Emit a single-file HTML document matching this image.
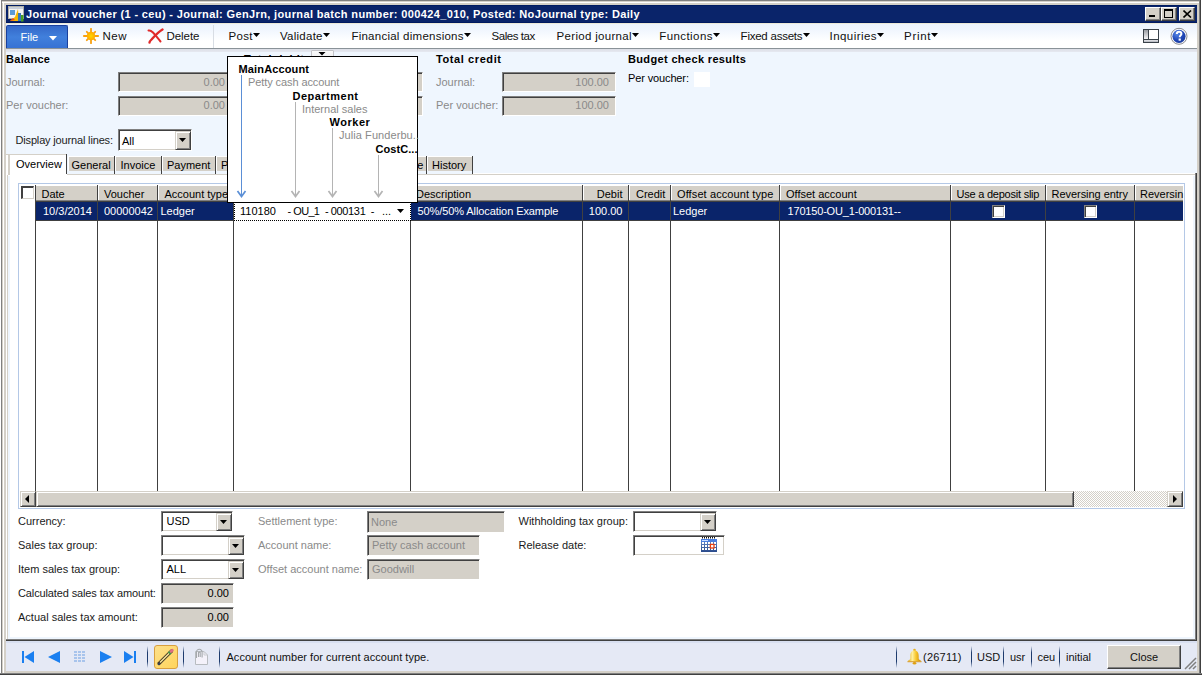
<!DOCTYPE html><html><head><meta charset='utf-8'><style>
*{margin:0;padding:0;box-sizing:border-box}
html,body{width:1202px;height:677px;overflow:hidden;background:#fff;position:relative;font-family:"Liberation Sans",sans-serif;font-size:11px;color:#000}
div{position:absolute}
.t{white-space:nowrap;line-height:14px}
</style></head><body><div style="left:0px;top:0px;width:1202px;height:677px;background:#d4d0c8"></div>
<div style="left:0px;top:0px;width:1202px;height:1px;background:#808080"></div>
<div style="left:0px;top:2px;width:1202px;height:1px;background:#fff"></div>
<div style="left:0px;top:0px;width:1px;height:677px;background:#fff"></div>
<div style="left:1px;top:0px;width:1px;height:677px;background:#808080"></div>
<div style="left:3px;top:2px;width:1px;height:675px;background:#fff"></div>
<div style="left:1199px;top:0px;width:1px;height:677px;background:#808080"></div>
<div style="left:1200px;top:0px;width:1px;height:677px;background:#404040"></div>
<div style="left:1201px;top:0px;width:1px;height:677px;background:#fff"></div>
<div style="left:0px;top:673px;width:1202px;height:1px;background:#808080"></div>
<div style="left:0px;top:674px;width:1202px;height:1px;background:#404040"></div>
<div style="left:0px;top:675px;width:1202px;height:2px;background:#fff"></div>
<div style="left:6px;top:5px;width:1191px;height:18px;background:#0a246a"></div>
<div style="left:6px;top:22px;width:1191px;height:1px;background:#001a60"></div>
<div style="left:6px;top:5px;width:1191px;height:1px;background:#001c62"></div>
<svg style="position:absolute;left:7px;top:5px" width="18" height="18" viewBox="0 0 18 18">
<rect x="1.5" y="1.5" width="15" height="12" fill="#f4f4f4" stroke="#b0b0a8"/>
<rect x="2" y="2" width="14" height="2" fill="#c8d0dc"/>
<rect x="3" y="5" width="5" height="5" fill="#5a9ad8"/>
<path d="M3 16 L8 12 L11 4 L12 16 Z" fill="#f5b800"/>
<path d="M3 16 L6 13 L8 15 Z" fill="#e84818"/>
<rect x="11" y="8" width="3" height="8" fill="#3a78b8"/>
<rect x="14" y="10" width="2.5" height="6.5" fill="#48a020"/>
</svg>
<div class="t" style="top:7px;font-size:11px;font-weight:bold;letter-spacing:0.365px;left:26px;color:#fff">Journal voucher (1 - ceu) - Journal: GenJrn, journal batch number: 000424_010, Posted: NoJournal type: Daily</div>
<div style="left:1145px;top:7px;width:16px;height:14px;background:#d4d0c8;border-top:1px solid #fff;border-left:1px solid #fff;border-right:1px solid #404040;border-bottom:1px solid #404040;box-shadow:inset -1px -1px 0 #808080"><div style="left:3px;top:7px;width:6px;height:2px;background:#000"></div></div>
<div style="left:1161px;top:7px;width:16px;height:14px;background:#d4d0c8;border-top:1px solid #fff;border-left:1px solid #fff;border-right:1px solid #404040;border-bottom:1px solid #404040;box-shadow:inset -1px -1px 0 #808080"><div style="left:2px;top:1px;width:9px;height:9px;border:1px solid #000;border-top-width:2px"></div></div>
<div style="left:1179px;top:7px;width:16px;height:14px;background:#d4d0c8;border-top:1px solid #fff;border-left:1px solid #fff;border-right:1px solid #404040;border-bottom:1px solid #404040;box-shadow:inset -1px -1px 0 #808080"><svg style="position:absolute;left:3px;top:2px" width="9" height="8"><path d="M0.5 0.5L8 7.5M8 0.5L0.5 7.5" stroke="#000" stroke-width="1.6"/></svg></div>
<div style="left:6px;top:23px;width:1191px;height:1px;background:#ece9d8"></div>
<div style="left:6px;top:24px;width:1191px;height:24px;background:linear-gradient(#edf4fd 0px,#f2f7fe 7px,#fbfdff 14px,#fff 17px)"></div>
<div style="left:6px;top:48px;width:1191px;height:1px;background:#8a9298"></div>
<div style="left:6px;top:49px;width:1191px;height:3px;background:linear-gradient(#dcdee6,#e6e9f1)"></div>
<div style="left:6px;top:25px;width:62px;height:23px;background:linear-gradient(#3468c8,#4180dc 50%,#3772d4);border:1px solid #1a409c;border-bottom:none;border-radius:2px 2px 0 0"></div>
<div class="t" style="top:30px;font-size:11px;left:20.5px;color:#fff">File</div>
<svg style="position:absolute;left:49px;top:36px" width="8" height="5"><path d="M0 0H8L4 4.5Z" fill="#fff"/></svg>
<svg style="position:absolute;left:83px;top:28px" width="16" height="16" viewBox="0 0 16 16">
<defs><radialGradient id="sg" cx="0.5" cy="0.5" r="0.5"><stop offset="0" stop-color="#ffd800"/><stop offset="1" stop-color="#ffa800"/></radialGradient></defs>
<g stroke="#f8a010" stroke-width="1.8" stroke-linecap="round"><path d="M8 0.8V15.2M0.8 8H15.2M3.8 3.8L12.2 12.2M12.2 3.8L3.8 12.2"/></g>
<circle cx="8" cy="8" r="4.2" fill="url(#sg)"/></svg>
<div class="t" style="top:29px;font-size:11.5px;letter-spacing:0.492px;left:102.5px;color:#111">New</div>
<svg style="position:absolute;left:147px;top:28px" width="17" height="16" viewBox="0 0 17 16">
<path d="M1.5 2.5C3 2 4 2.5 6 4.5C8.5 7 11 10.5 13.5 13.5" stroke="#e02a2a" stroke-width="2" fill="none" stroke-linecap="round"/>
<path d="M15.5 1.5C12 3.5 8 7.5 4.5 11.5C3 13 2.5 14 2.5 14.5" stroke="#e02a2a" stroke-width="2.4" fill="none" stroke-linecap="round"/></svg>
<div class="t" style="top:29px;font-size:11.5px;letter-spacing:-0.047px;left:166.5px;color:#111">Delete</div>
<div style="left:213px;top:25px;width:1px;height:23px;background:#d8dde4"></div>
<div class="t" style="top:29px;font-size:11.5px;letter-spacing:0.333px;left:228.5px;color:#111">Post</div>
<svg style="position:absolute;left:253px;top:33px" width="8" height="5"><path d="M0 0H7L3.5 4Z" fill="#000"/></svg>
<div class="t" style="top:29px;font-size:11.5px;letter-spacing:0.259px;left:280px;color:#111">Validate</div>
<svg style="position:absolute;left:323px;top:33px" width="8" height="5"><path d="M0 0H7L3.5 4Z" fill="#000"/></svg>
<div class="t" style="top:29px;font-size:11.5px;letter-spacing:0.249px;left:351.4px;color:#111">Financial dimensions</div>
<svg style="position:absolute;left:464px;top:33px" width="8" height="5"><path d="M0 0H7L3.5 4Z" fill="#000"/></svg>
<div class="t" style="top:29px;font-size:11.5px;letter-spacing:-0.448px;left:491.5px;color:#111">Sales tax</div>
<div class="t" style="top:29px;font-size:11.5px;letter-spacing:0.305px;left:556.6px;color:#111">Period journal</div>
<svg style="position:absolute;left:632px;top:33px" width="8" height="5"><path d="M0 0H7L3.5 4Z" fill="#000"/></svg>
<div class="t" style="top:29px;font-size:11.5px;letter-spacing:0.432px;left:659.2px;color:#111">Functions</div>
<svg style="position:absolute;left:713px;top:33px" width="8" height="5"><path d="M0 0H7L3.5 4Z" fill="#000"/></svg>
<div class="t" style="top:29px;font-size:11.5px;letter-spacing:-0.239px;left:740.6px;color:#111">Fixed assets</div>
<svg style="position:absolute;left:803px;top:33px" width="8" height="5"><path d="M0 0H7L3.5 4Z" fill="#000"/></svg>
<div class="t" style="top:29px;font-size:11.5px;letter-spacing:0.431px;left:829.6px;color:#111">Inquiries</div>
<svg style="position:absolute;left:877px;top:33px" width="8" height="5"><path d="M0 0H7L3.5 4Z" fill="#000"/></svg>
<div class="t" style="top:29px;font-size:11.5px;letter-spacing:0.715px;left:904px;color:#111">Print</div>
<svg style="position:absolute;left:931px;top:33px" width="8" height="5"><path d="M0 0H7L3.5 4Z" fill="#000"/></svg>
<svg style="position:absolute;left:1143px;top:29px" width="16" height="14" viewBox="0 0 16 14">
<defs><linearGradient id="lg1" x1="0" y1="0" x2="0" y2="1"><stop offset="0" stop-color="#9a9ea4"/><stop offset="1" stop-color="#f4f4f6"/></linearGradient>
<linearGradient id="lg2" x1="0" y1="0" x2="0" y2="1"><stop offset="0" stop-color="#e8e8ec"/><stop offset="1" stop-color="#b0b4bc"/></linearGradient></defs>
<rect x="0.5" y="0.5" width="15" height="13" fill="#fff" stroke="#3a424a"/>
<rect x="1" y="1" width="4" height="9" fill="url(#lg1)"/>
<path d="M5.5 1V10M1 10.5H15" stroke="#3a424a"/>
<rect x="1" y="11" width="14" height="2" fill="url(#lg2)"/></svg>
<svg style="position:absolute;left:1170px;top:27px" width="18" height="18" viewBox="0 0 18 18">
<defs><radialGradient id="hg" cx="0.35" cy="0.3" r="0.8"><stop offset="0" stop-color="#5a8ae8"/><stop offset="0.6" stop-color="#2048b8"/><stop offset="1" stop-color="#1a3a9a"/></radialGradient></defs>
<circle cx="9" cy="9.3" r="8" fill="#fff" stroke="#8c8c90" stroke-width="1"/>
<circle cx="9" cy="9.3" r="6.6" fill="url(#hg)"/>
<path d="M6.8 7.1C6.8 5.5 7.7 4.7 9.1 4.7C10.6 4.7 11.4 5.6 11.4 6.8C11.4 8.4 9.7 8.5 9.7 10.3" fill="none" stroke="#fff" stroke-width="2"/>
<rect x="8.6" y="11.5" width="2.2" height="2.2" fill="#fff"/></svg>
<div style="left:6px;top:52px;width:1191px;height:122px;background:#eff6fe"></div>
<div class="t" style="top:52px;font-size:11px;font-weight:bold;letter-spacing:0.297px;left:6px;">Balance</div>
<div class="t" style="top:75px;font-size:11px;left:6px;color:#8a8a8a">Journal:</div>
<div class="t" style="top:98px;font-size:11px;left:6px;color:#8a8a8a">Per voucher:</div>
<div style="left:118px;top:72px;width:114px;height:20px;background:#d4d0c8;border-style:solid;border-width:1px;border-color:#808080 #fff #fff #808080;box-shadow:inset 1px 1px 0 #404040,inset -1px -1px 0 #d4d0c8"></div>
<div style="left:118px;top:96px;width:114px;height:20px;background:#d4d0c8;border-style:solid;border-width:1px;border-color:#808080 #fff #fff #808080;box-shadow:inset 1px 1px 0 #404040,inset -1px -1px 0 #d4d0c8"></div>
<div class="t" style="top:75px;font-size:11px;right:977.00px;color:#8a8a8a">0.00</div>
<div class="t" style="top:98px;font-size:11px;right:977.00px;color:#8a8a8a">0.00</div>
<div class="t" style="top:52px;font-size:11px;font-weight:bold;letter-spacing:0.519px;left:244px;">Total debit</div>
<div style="left:311px;top:50px;width:23px;height:14px;background:linear-gradient(#fafafa,#e8e8ea);border:1px solid #c4c4c8;border-radius:1px"></div>
<svg style="position:absolute;left:318px;top:52px" width="8" height="5"><path d="M0.5 0H7.5L4 3.5Z" fill="#000"/></svg>
<div style="left:304px;top:72px;width:119px;height:20px;background:#d4d0c8;border-style:solid;border-width:1px;border-color:#808080 #fff #fff #808080;box-shadow:inset 1px 1px 0 #404040,inset -1px -1px 0 #d4d0c8"></div>
<div style="left:304px;top:96px;width:119px;height:20px;background:#d4d0c8;border-style:solid;border-width:1px;border-color:#808080 #fff #fff #808080;box-shadow:inset 1px 1px 0 #404040,inset -1px -1px 0 #d4d0c8"></div>
<div class="t" style="top:52px;font-size:11px;font-weight:bold;letter-spacing:0.591px;left:436px;">Total credit</div>
<div class="t" style="top:75px;font-size:11px;left:436px;color:#8a8a8a">Journal:</div>
<div class="t" style="top:98px;font-size:11px;left:436px;color:#8a8a8a">Per voucher:</div>
<div style="left:502px;top:72px;width:114px;height:20px;background:#d4d0c8;border-style:solid;border-width:1px;border-color:#808080 #fff #fff #808080;box-shadow:inset 1px 1px 0 #404040,inset -1px -1px 0 #d4d0c8"></div>
<div style="left:502px;top:96px;width:114px;height:20px;background:#d4d0c8;border-style:solid;border-width:1px;border-color:#808080 #fff #fff #808080;box-shadow:inset 1px 1px 0 #404040,inset -1px -1px 0 #d4d0c8"></div>
<div class="t" style="top:75px;font-size:11px;right:593.00px;color:#8a8a8a">100.00</div>
<div class="t" style="top:98px;font-size:11px;right:593.00px;color:#8a8a8a">100.00</div>
<div class="t" style="top:52px;font-size:11px;font-weight:bold;letter-spacing:0.352px;left:628px;">Budget check results</div>
<div class="t" style="top:71px;font-size:11px;letter-spacing:-0.128px;left:628px;">Per voucher:</div>
<div style="left:694px;top:72px;width:16px;height:15px;background:#fff"></div>
<div class="t" style="top:133px;font-size:11px;letter-spacing:-0.162px;left:15.5px;color:#222">Display journal lines:</div>
<div style="left:118px;top:129px;width:74px;height:22px;background:#fff;border-style:solid;border-width:1px;border-color:#808080 #fff #fff #808080;box-shadow:inset 1px 1px 0 #404040,inset -1px -1px 0 #d4d0c8"></div>
<div style="left:175px;top:131px;width:16px;height:19px;background:#d4d0c8;border-style:solid;border-width:1px;border-color:#d4d0c8 #404040 #404040 #d4d0c8;box-shadow:inset 1px 1px 0 #fff,inset -1px -1px 0 #808080"></div>
<svg style="position:absolute;left:179px;top:138px" width="8" height="5"><path d="M0 0H7L3.5 4Z" fill="#000"/></svg>
<div class="t" style="top:134px;font-size:11px;left:122px;">All</div>
<div style="left:6px;top:174px;width:1191px;height:467px;background:#fff"></div>
<div style="left:6px;top:174px;width:1190px;height:1px;background:#d4d0c8"></div>
<div style="left:6px;top:175px;width:1190px;height:1px;background:#fff"></div>
<div style="left:6px;top:174px;width:1px;height:466px;background:#fff"></div>
<div style="left:7px;top:175px;width:1px;height:465px;background:#d4d0c8"></div>
<div style="left:8px;top:176px;width:2px;height:462px;background:#eff6fe"></div>
<div style="left:8px;top:637px;width:1187px;height:2px;background:#eff6fe"></div>
<div style="left:1193px;top:176px;width:2px;height:462px;background:#eff6fe"></div>
<div style="left:6px;top:639px;width:1190px;height:1px;background:#808080"></div>
<div style="left:6px;top:640px;width:1191px;height:1px;background:#404040"></div>
<div style="left:473px;top:173px;width:722px;height:1px;background:#fff"></div>
<div style="left:1195px;top:173px;width:1px;height:467px;background:#808080"></div>
<div style="left:1196px;top:173px;width:1px;height:468px;background:#404040"></div>
<div style="left:68px;top:155px;width:47px;height:19px;background:#eff6fe"></div>
<div style="left:68px;top:156px;width:47px;height:15px;background:#d4d0c8;border-top:1px solid #fff;border-left:1px solid #fff"></div>
<div style="left:114px;top:156px;width:1px;height:18px;background:#404040"></div>
<div class="t" style="top:158px;font-size:11px;left:71.5px;">General</div>
<div style="left:115px;top:155px;width:47px;height:19px;background:#eff6fe"></div>
<div style="left:115px;top:156px;width:47px;height:15px;background:#d4d0c8;border-top:1px solid #fff;border-left:1px solid #fff"></div>
<div style="left:161px;top:156px;width:1px;height:18px;background:#404040"></div>
<div class="t" style="top:158px;font-size:11px;left:120.5px;">Invoice</div>
<div style="left:162px;top:155px;width:54px;height:19px;background:#eff6fe"></div>
<div style="left:162px;top:156px;width:54px;height:15px;background:#d4d0c8;border-top:1px solid #fff;border-left:1px solid #fff"></div>
<div style="left:215px;top:156px;width:1px;height:18px;background:#404040"></div>
<div class="t" style="top:158px;font-size:11px;left:167px;">Payment</div>
<div style="left:216px;top:155px;width:84px;height:19px;background:#eff6fe"></div>
<div style="left:216px;top:156px;width:84px;height:15px;background:#d4d0c8;border-top:1px solid #fff;border-left:1px solid #fff"></div>
<div style="left:299px;top:156px;width:1px;height:18px;background:#404040"></div>
<div class="t" style="top:158px;font-size:11px;left:221px;">Payment fee</div>
<div style="left:300px;top:155px;width:127px;height:19px;background:#eff6fe"></div>
<div style="left:300px;top:156px;width:127px;height:15px;background:#d4d0c8;border-top:1px solid #fff;border-left:1px solid #fff"></div>
<div style="left:426px;top:156px;width:1px;height:18px;background:#404040"></div>
<div class="t" style="top:158px;font-size:11px;left:367.84375px;">Remittance</div>
<div style="left:427px;top:155px;width:46px;height:19px;background:#eff6fe"></div>
<div style="left:427px;top:156px;width:46px;height:15px;background:#d4d0c8;border-top:1px solid #fff;border-left:1px solid #fff"></div>
<div style="left:472px;top:156px;width:1px;height:18px;background:#404040"></div>
<div class="t" style="top:158px;font-size:11px;left:432px;">History</div>
<div style="left:6px;top:154px;width:61px;height:21px;background:#fff;border-top:1px solid #d4d0c8"></div>
<div style="left:8px;top:155px;width:2px;height:20px;background:#d4d0c8"></div>
<div style="left:66px;top:154px;width:1px;height:20px;background:#404040"></div>
<div class="t" style="top:157px;font-size:11px;left:16px;">Overview</div>
<div style="left:18px;top:183px;width:1167px;height:326px;border:1px solid #b4c8e6;background:#fff"></div>
<div style="left:36px;top:185px;width:1147px;height:16px;background:#d4d0c8"></div>
<div style="left:36px;top:185px;width:1147px;height:1px;background:#fff"></div>
<div style="left:36px;top:200px;width:1147px;height:1px;background:#808080"></div>
<div style="left:36px;top:201px;width:1147px;height:1px;background:#404040"></div>
<div style="left:21px;top:186px;width:13px;height:13px;background:#fff;border-style:solid;border-width:2px 1px 1px 2px;border-color:#404040 #d4d0c8 #d4d0c8 #404040"></div>
<div style="left:36px;top:202px;width:1147px;height:18px;background:#0a246a"></div>
<div style="left:36px;top:220px;width:1147px;height:1px;background:#404040"></div>
<div style="left:35px;top:185px;width:1px;height:306px;background:#404040"></div>
<div style="left:97px;top:185px;width:1px;height:306px;background:#404040"></div>
<div style="left:98px;top:186px;width:1px;height:14px;background:#fff"></div>
<div style="left:157px;top:185px;width:1px;height:306px;background:#404040"></div>
<div style="left:158px;top:186px;width:1px;height:14px;background:#fff"></div>
<div style="left:233px;top:185px;width:1px;height:306px;background:#404040"></div>
<div style="left:234px;top:186px;width:1px;height:14px;background:#fff"></div>
<div style="left:410px;top:185px;width:1px;height:306px;background:#404040"></div>
<div style="left:411px;top:186px;width:1px;height:14px;background:#fff"></div>
<div style="left:582px;top:185px;width:1px;height:306px;background:#404040"></div>
<div style="left:583px;top:186px;width:1px;height:14px;background:#fff"></div>
<div style="left:628px;top:185px;width:1px;height:306px;background:#404040"></div>
<div style="left:629px;top:186px;width:1px;height:14px;background:#fff"></div>
<div style="left:670px;top:185px;width:1px;height:306px;background:#404040"></div>
<div style="left:671px;top:186px;width:1px;height:14px;background:#fff"></div>
<div style="left:779px;top:185px;width:1px;height:306px;background:#404040"></div>
<div style="left:780px;top:186px;width:1px;height:14px;background:#fff"></div>
<div style="left:950px;top:185px;width:1px;height:306px;background:#404040"></div>
<div style="left:951px;top:186px;width:1px;height:14px;background:#fff"></div>
<div style="left:1045px;top:185px;width:1px;height:306px;background:#404040"></div>
<div style="left:1046px;top:186px;width:1px;height:14px;background:#fff"></div>
<div style="left:1134px;top:185px;width:1px;height:306px;background:#404040"></div>
<div style="left:1135px;top:186px;width:1px;height:14px;background:#fff"></div>
<div class="t" style="top:187px;font-size:11px;left:41.5px;">Date</div>
<div class="t" style="top:187px;font-size:11px;left:104px;">Voucher</div>
<div class="t" style="top:187px;font-size:11px;left:164.5px;">Account type</div>
<div class="t" style="top:187px;font-size:11px;left:416px;">Description</div>
<div class="t" style="top:187px;font-size:11px;left:636px;">Credit</div>
<div class="t" style="top:187px;font-size:11px;letter-spacing:0.102px;left:677px;">Offset account type</div>
<div class="t" style="top:187px;font-size:11px;left:786px;">Offset account</div>
<div class="t" style="top:187px;font-size:11px;letter-spacing:-0.228px;left:956.5px;">Use a deposit slip</div>
<div class="t" style="top:187px;font-size:11px;letter-spacing:-0.040px;left:1051.5px;">Reversing entry</div>
<div class="t" style="top:187px;font-size:11px;left:1140px;">Reversin</div>
<div class="t" style="top:187px;font-size:11px;right:579.50px;">Debit</div>
<div class="t" style="top:204px;font-size:11px;left:43px;color:#fff">10/3/2014</div>
<div class="t" style="top:204px;font-size:11px;left:104px;color:#fff">00000042</div>
<div class="t" style="top:204px;font-size:11px;left:160.5px;color:#fff">Ledger</div>
<div class="t" style="top:204px;font-size:11px;letter-spacing:-0.087px;left:417.5px;color:#fff">50%/50% Allocation Example</div>
<div class="t" style="top:204px;font-size:11px;right:579.50px;color:#fff">100.00</div>
<div class="t" style="top:204px;font-size:11px;left:673px;color:#fff">Ledger</div>
<div class="t" style="top:204px;font-size:11px;letter-spacing:-0.178px;left:787.5px;color:#fff">170150-OU_1-000131--</div>
<div style="left:992px;top:205px;width:13px;height:13px;background:#fff;border-style:solid;border-width:1px;border-color:#808080 #fff #fff #808080;box-shadow:inset 1px 1px 0 #404040,inset -1px -1px 0 #d4d0c8"></div>
<div style="left:1084px;top:205px;width:13px;height:13px;background:#fff;border-style:solid;border-width:1px;border-color:#808080 #fff #fff #808080;box-shadow:inset 1px 1px 0 #404040,inset -1px -1px 0 #d4d0c8"></div>
<div style="left:234px;top:202px;width:177px;height:19px;background:#fff;border:1px dotted #000"></div>
<div class="t" style="top:204px;font-size:11px;left:240px;">110180</div>
<div class="t" style="top:204px;font-size:11px;left:287.5px;">-</div>
<div class="t" style="top:204px;font-size:11px;letter-spacing:-0.683px;left:293.3px;">OU_1</div>
<div class="t" style="top:204px;font-size:11px;left:325px;">-</div>
<div class="t" style="top:204px;font-size:11px;letter-spacing:-0.350px;left:330.8px;">000131</div>
<div class="t" style="top:204px;font-size:11px;left:370.8px;">-</div>
<div class="t" style="top:204px;font-size:11px;left:382px;">...</div>
<svg style="position:absolute;left:397px;top:209px" width="8" height="5"><path d="M0 0H7L3.5 4Z" fill="#000"/></svg>
<div style="left:1070px;top:491px;width:100px;height:16px;background-image:repeating-conic-gradient(#d4d0c8 0 25%,#fff 0 50%);background-size:2px 2px"></div>
<div style="left:20px;top:491px;width:16px;height:16px;background:#d4d0c8;border-style:solid;border-width:1px;border-color:#d4d0c8 #404040 #404040 #d4d0c8;box-shadow:inset 1px 1px 0 #fff,inset -1px -1px 0 #808080"></div>
<svg style="position:absolute;left:25px;top:495px" width="5" height="8"><path d="M4 0V8L0 4Z" fill="#000"/></svg>
<div style="left:36px;top:491px;width:1038px;height:16px;background:#d4d0c8;border-style:solid;border-width:1px;border-color:#d4d0c8 #404040 #404040 #d4d0c8;box-shadow:inset 1px 1px 0 #fff,inset -1px -1px 0 #808080"></div>
<div style="left:1167px;top:491px;width:16px;height:16px;background:#d4d0c8;border-style:solid;border-width:1px;border-color:#d4d0c8 #404040 #404040 #d4d0c8;box-shadow:inset 1px 1px 0 #fff,inset -1px -1px 0 #808080"></div>
<svg style="position:absolute;left:1173px;top:495px" width="5" height="8"><path d="M0 0V8L4 4Z" fill="#000"/></svg>
<div style="left:227px;top:56px;width:191px;height:147px;background:#fff;border:1px solid #000;overflow:hidden"></div>
<div class="t" style="top:62px;font-size:11px;font-weight:bold;letter-spacing:0.144px;left:238.5px;">MainAccount</div>
<div class="t" style="top:75px;font-size:11px;letter-spacing:-0.090px;left:248px;color:#8a8a8a">Petty cash account</div>
<div class="t" style="top:89px;font-size:11px;font-weight:bold;letter-spacing:0.486px;left:292.5px;">Department</div>
<div class="t" style="top:102px;font-size:11px;letter-spacing:0.002px;left:302px;color:#8a8a8a">Internal sales</div>
<div class="t" style="top:115px;font-size:11px;font-weight:bold;letter-spacing:0.519px;left:329.5px;">Worker</div>
<div class="t" style="top:128px;font-size:11px;letter-spacing:0.071px;left:339px;color:#8a8a8a">Julia Funderbu..</div>
<div class="t" style="top:142px;font-size:11px;font-weight:bold;letter-spacing:0.062px;left:375.5px;">CostC...</div>
<svg style="position:absolute;left:227px;top:56px" width="191" height="147">
<g fill="none" stroke-width="1">
<path d="M14.5 19V140" stroke="#5b8fd6"/><path d="M10.5 135L14.5 140.5L18.5 135" stroke="#5b8fd6" stroke-width="1.7"/>
<path d="M68.5 46V140" stroke="#b4b4b4"/><path d="M64.5 135L68.5 140.5L72.5 135" stroke="#b4b4b4" stroke-width="1.7"/>
<path d="M105.5 72V140" stroke="#b4b4b4"/><path d="M101.5 135L105.5 140.5L109.5 135" stroke="#b4b4b4" stroke-width="1.7"/>
<path d="M151.5 99V140" stroke="#b4b4b4"/><path d="M147.5 135L151.5 140.5L155.5 135" stroke="#b4b4b4" stroke-width="1.7"/>
</g></svg>
<div class="t" style="top:514px;font-size:11px;left:18px;color:#1a1a1a">Currency:</div>
<div class="t" style="top:538px;font-size:11px;left:18px;color:#1a1a1a">Sales tax group:</div>
<div class="t" style="top:562px;font-size:11px;left:18px;color:#1a1a1a">Item sales tax group:</div>
<div class="t" style="top:586px;font-size:11px;letter-spacing:-0.124px;left:18px;color:#1a1a1a">Calculated sales tax amount:</div>
<div class="t" style="top:610px;font-size:11px;left:18px;color:#1a1a1a">Actual sales tax amount:</div>
<div style="left:161px;top:511px;width:72px;height:21px;background:#fff;border-style:solid;border-width:1px;border-color:#808080 #fff #fff #808080;box-shadow:inset 1px 1px 0 #404040,inset -1px -1px 0 #d4d0c8"></div>
<div style="left:216px;top:513px;width:16px;height:18px;background:#d4d0c8;border-style:solid;border-width:1px;border-color:#d4d0c8 #404040 #404040 #d4d0c8;box-shadow:inset 1px 1px 0 #fff,inset -1px -1px 0 #808080"></div>
<svg style="position:absolute;left:220px;top:520px" width="8" height="5"><path d="M0 0H7L3.5 4Z" fill="#000"/></svg>
<div class="t" style="top:514px;font-size:11px;left:166.5px;">USD</div>
<div style="left:161px;top:535px;width:84px;height:21px;background:#fff;border-style:solid;border-width:1px;border-color:#808080 #fff #fff #808080;box-shadow:inset 1px 1px 0 #404040,inset -1px -1px 0 #d4d0c8"></div>
<div style="left:228px;top:537px;width:16px;height:18px;background:#d4d0c8;border-style:solid;border-width:1px;border-color:#d4d0c8 #404040 #404040 #d4d0c8;box-shadow:inset 1px 1px 0 #fff,inset -1px -1px 0 #808080"></div>
<svg style="position:absolute;left:232px;top:544px" width="8" height="5"><path d="M0 0H7L3.5 4Z" fill="#000"/></svg>
<div style="left:161px;top:559px;width:84px;height:21px;background:#fff;border-style:solid;border-width:1px;border-color:#808080 #fff #fff #808080;box-shadow:inset 1px 1px 0 #404040,inset -1px -1px 0 #d4d0c8"></div>
<div style="left:228px;top:561px;width:16px;height:18px;background:#d4d0c8;border-style:solid;border-width:1px;border-color:#d4d0c8 #404040 #404040 #d4d0c8;box-shadow:inset 1px 1px 0 #fff,inset -1px -1px 0 #808080"></div>
<svg style="position:absolute;left:232px;top:568px" width="8" height="5"><path d="M0 0H7L3.5 4Z" fill="#000"/></svg>
<div class="t" style="top:562px;font-size:11px;left:166.5px;">ALL</div>
<div style="left:161px;top:583px;width:73px;height:21px;background:#d4d0c8;border-style:solid;border-width:1px;border-color:#808080 #fff #fff #808080;box-shadow:inset 1px 1px 0 #404040,inset -1px -1px 0 #d4d0c8"></div>
<div class="t" style="top:586px;font-size:11px;right:973.00px;">0.00</div>
<div style="left:161px;top:607px;width:73px;height:21px;background:#d4d0c8;border-style:solid;border-width:1px;border-color:#808080 #fff #fff #808080;box-shadow:inset 1px 1px 0 #404040,inset -1px -1px 0 #d4d0c8"></div>
<div class="t" style="top:610px;font-size:11px;right:973.00px;">0.00</div>
<div class="t" style="top:514px;font-size:11px;left:258px;color:#8a8a8a">Settlement type:</div>
<div class="t" style="top:538px;font-size:11px;left:258px;color:#8a8a8a">Account name:</div>
<div class="t" style="top:562px;font-size:11px;left:258px;color:#8a8a8a">Offset account name:</div>
<div style="left:367px;top:511px;width:138px;height:22px;background:#d4d0c8;border-style:solid;border-width:1px;border-color:#808080 #fff #fff #808080;box-shadow:inset 1px 1px 0 #404040,inset -1px -1px 0 #d4d0c8"></div>
<div class="t" style="top:515px;font-size:11px;left:371px;color:#8a8a8a">None</div>
<div style="left:367px;top:535px;width:113px;height:21px;background:#d4d0c8;border-style:solid;border-width:1px;border-color:#808080 #fff #fff #808080;box-shadow:inset 1px 1px 0 #404040,inset -1px -1px 0 #d4d0c8"></div>
<div class="t" style="top:538px;font-size:11px;left:372px;color:#8a8a8a">Petty cash account</div>
<div style="left:367px;top:559px;width:113px;height:21px;background:#d4d0c8;border-style:solid;border-width:1px;border-color:#808080 #fff #fff #808080;box-shadow:inset 1px 1px 0 #404040,inset -1px -1px 0 #d4d0c8"></div>
<div class="t" style="top:562px;font-size:11px;left:372px;color:#8a8a8a">Goodwill</div>
<div class="t" style="top:514px;font-size:11px;left:518.5px;color:#1a1a1a">Withholding tax group:</div>
<div class="t" style="top:538px;font-size:11px;left:518.5px;color:#1a1a1a">Release date:</div>
<div style="left:633px;top:511px;width:84px;height:21px;background:#fff;border-style:solid;border-width:1px;border-color:#808080 #fff #fff #808080;box-shadow:inset 1px 1px 0 #404040,inset -1px -1px 0 #d4d0c8"></div>
<div style="left:700px;top:513px;width:16px;height:18px;background:#d4d0c8;border-style:solid;border-width:1px;border-color:#d4d0c8 #404040 #404040 #d4d0c8;box-shadow:inset 1px 1px 0 #fff,inset -1px -1px 0 #808080"></div>
<svg style="position:absolute;left:704px;top:520px" width="8" height="5"><path d="M0 0H7L3.5 4Z" fill="#000"/></svg>
<div style="left:633px;top:535px;width:92px;height:21px;background:#fff;border-style:solid;border-width:1px;border-color:#808080 #fff #fff #808080;box-shadow:inset 1px 1px 0 #404040,inset -1px -1px 0 #d4d0c8"></div>
<svg style="position:absolute;left:701px;top:537px" width="16" height="15" viewBox="0 0 16 15">
<defs><linearGradient id="cg" x1="0" y1="0" x2="0" y2="1"><stop offset="0" stop-color="#6a90d0"/><stop offset="1" stop-color="#2a4a8a"/></linearGradient></defs>
<rect x="0" y="0" width="16" height="2" fill="#fff"/>
<g fill="#111"><rect x="1" y="0" width="1" height="1.5"/><rect x="3" y="0" width="1" height="1.5"/><rect x="5" y="0" width="1" height="1.5"/><rect x="7" y="0" width="1" height="1.5"/><rect x="9" y="0" width="1" height="1.5"/><rect x="11" y="0" width="1" height="1.5"/><rect x="13" y="0" width="1" height="1.5"/></g>
<rect x="0" y="2" width="16" height="13" fill="url(#cg)"/>
<rect x="0" y="2" width="16" height="3" fill="#4a7ee0"/>
<rect x="1" y="3" width="6" height="1" fill="#c8dcff"/>
<rect x="1" y="5" width="2" height="2" fill="#fff"/><rect x="1" y="8" width="2" height="2" fill="#fff"/><rect x="1" y="11" width="2" height="2" fill="#fff"/><rect x="4" y="5" width="2" height="2" fill="#fff"/><rect x="4" y="8" width="2" height="2" fill="#fff"/><rect x="4" y="11" width="2" height="2" fill="#fff"/><rect x="7" y="5" width="2" height="2" fill="#fff"/><rect x="7" y="8" width="2" height="2" fill="#fff"/><rect x="7" y="11" width="2" height="2" fill="#fff"/><rect x="10" y="5" width="2" height="2" fill="#fff"/><rect x="10" y="8" width="2" height="2" fill="#fff"/><rect x="10" y="11" width="2" height="2" fill="#fff"/><rect x="13" y="5" width="2" height="2" fill="#fff"/><rect x="13" y="8" width="2" height="2" fill="#fff"/><rect x="13" y="11" width="2" height="2" fill="#fff"/>
<rect x="9.4" y="7.4" width="3.6" height="3.6" fill="#fff" stroke="#e84010" stroke-width="1.3"/>
</svg>
<div style="left:6px;top:641px;width:1191px;height:30px;background:#e5e9f5"></div>
<div style="left:6px;top:641px;width:1191px;height:2px;background:#d8dff0"></div>
<div style="left:6px;top:671px;width:1193px;height:2px;background:#d4d0c8"></div>
<svg style="position:absolute;left:20px;top:650px" width="120" height="14" viewBox="0 0 120 14">
<rect x="2" y="1" width="2" height="12" fill="#1a7ff0"/><path d="M14 1V13L4.5 7Z" fill="#1a7ff0"/>
<path d="M40 1V13L28 7Z" fill="#1a7ff0"/>
<g fill="#a8c4ec"><rect x="54" y="1" width="3" height="2"/><rect x="58" y="1" width="3" height="2"/><rect x="62" y="1" width="3" height="2"/>
<rect x="54" y="4" width="3" height="2"/><rect x="58" y="4" width="3" height="2"/><rect x="62" y="4" width="3" height="2"/>
<rect x="54" y="7" width="3" height="2"/><rect x="58" y="7" width="3" height="2"/><rect x="62" y="7" width="3" height="2"/>
<rect x="54" y="10" width="3" height="2"/><rect x="58" y="10" width="3" height="2"/><rect x="62" y="10" width="3" height="2"/></g>
<path d="M80 1V13L92 7Z" fill="#1a7ff0"/>
<path d="M104 1V13L113.5 7Z" fill="#1a7ff0"/><rect x="114" y="1" width="2" height="12" fill="#1a7ff0"/>
</svg>
<div style="left:147px;top:646px;width:1px;height:22px;background:linear-gradient(rgba(30,60,110,0),#1e3c6e 30%,#1e3c6e 70%,rgba(30,60,110,0))"></div>
<div style="left:183px;top:646px;width:1px;height:22px;background:linear-gradient(rgba(30,60,110,0),#1e3c6e 30%,#1e3c6e 70%,rgba(30,60,110,0))"></div>
<div style="left:219px;top:646px;width:1px;height:22px;background:linear-gradient(rgba(30,60,110,0),#1e3c6e 30%,#1e3c6e 70%,rgba(30,60,110,0))"></div>
<div style="left:896px;top:646px;width:1px;height:22px;background:linear-gradient(rgba(30,60,110,0),#1e3c6e 30%,#1e3c6e 70%,rgba(30,60,110,0))"></div>
<div style="left:971px;top:646px;width:1px;height:22px;background:linear-gradient(rgba(30,60,110,0),#1e3c6e 30%,#1e3c6e 70%,rgba(30,60,110,0))"></div>
<div style="left:1003px;top:646px;width:1px;height:22px;background:linear-gradient(rgba(30,60,110,0),#1e3c6e 30%,#1e3c6e 70%,rgba(30,60,110,0))"></div>
<div style="left:1031px;top:646px;width:1px;height:22px;background:linear-gradient(rgba(30,60,110,0),#1e3c6e 30%,#1e3c6e 70%,rgba(30,60,110,0))"></div>
<div style="left:1059px;top:646px;width:1px;height:22px;background:linear-gradient(rgba(30,60,110,0),#1e3c6e 30%,#1e3c6e 70%,rgba(30,60,110,0))"></div>
<div style="left:154px;top:645px;width:24px;height:24px;border:1px solid #d8a040;border-radius:3px;background:linear-gradient(135deg,#fde08a,#ffd45c)"></div>
<svg style="position:absolute;left:150px;top:642px" width="65" height="30" viewBox="0 0 65 30">
<path d="M9 21.5L21.5 9" stroke="#4a3c24" stroke-width="3.2" stroke-linecap="round"/>
<path d="M10 20.5L20.5 10" stroke="#f8e89c" stroke-width="1.5"/>
<path d="M19 11.5L20.5 10" stroke="#3a9a48" stroke-width="3.2"/>
<path d="M21 9.5L22.3 8.2" stroke="#e07080" stroke-width="2.8" stroke-linecap="round"/>
<path d="M8.6 22.2L9.6 21.2" stroke="#304060" stroke-width="1.6" stroke-linecap="round"/>
<path d="M45.5 9.5H54L57.5 13V22.5H45.5Z" fill="#f4f2fa" stroke="#b8bcc0"/>
<path d="M54 9.5V13H57.5" fill="none" stroke="#c8ccd0"/>
<path d="M46.5 16V10A2.8 2.8 0 0 1 52.1 10V15.5M48.5 15V10.5A1.3 1.3 0 0 1 50.2 10.5V15" fill="none" stroke="#a4a8ac" stroke-width="1.1"/>
</svg>
<div class="t" style="top:650px;font-size:11px;letter-spacing:0.027px;left:226.5px;color:#111">Account number for current account type.</div>
<svg style="position:absolute;left:906px;top:648px" width="17" height="17" viewBox="0 0 17 17">
<defs><linearGradient id="bg1" x1="0" y1="0" x2="1" y2="0"><stop offset="0" stop-color="#e0a000"/><stop offset="0.35" stop-color="#fff0a0"/><stop offset="0.6" stop-color="#f8c830"/><stop offset="1" stop-color="#c88000"/></linearGradient></defs>
<circle cx="8.5" cy="2" r="1.3" fill="#e8b020"/>
<path d="M8.5 2.5C5.3 2.5 4.3 5 4.3 8V10.5C4.3 11.6 2.6 12.2 1.5 13.3H15.5C14.4 12.2 12.7 11.6 12.7 10.5V8C12.7 5 11.7 2.5 8.5 2.5Z" fill="url(#bg1)"/>
<path d="M1.5 13.3H15.5V14.2H1.5Z" fill="#d89000"/>
<ellipse cx="8.5" cy="15.2" rx="1.8" ry="1.3" fill="#e0a010"/></svg>
<div class="t" style="top:650px;font-size:11px;letter-spacing:0.229px;left:923px;color:#111">(26711)</div>
<div class="t" style="top:650px;font-size:11px;left:977px;color:#111">USD</div>
<div class="t" style="top:650px;font-size:11px;left:1010px;color:#111">usr</div>
<div class="t" style="top:650px;font-size:11px;left:1037.5px;color:#111">ceu</div>
<div class="t" style="top:650px;font-size:11px;left:1066px;color:#111">initial</div>
<div style="left:1107px;top:645px;width:74px;height:24px;background:#d4d0c8;border-style:solid;border-width:1px;border-color:#fff #404040 #404040 #fff;box-shadow:inset -1px -1px 0 #808080"></div>
<div class="t" style="top:650px;font-size:11px;left:1130px;color:#111">Close</div>
<svg style="position:absolute;left:1183px;top:655px" width="14" height="15" viewBox="0 0 14 15">
<path d="M2 14L13 3M6 14L13 7M10 14L13 11" stroke="#808080" stroke-width="1.5"/></svg></body></html>
